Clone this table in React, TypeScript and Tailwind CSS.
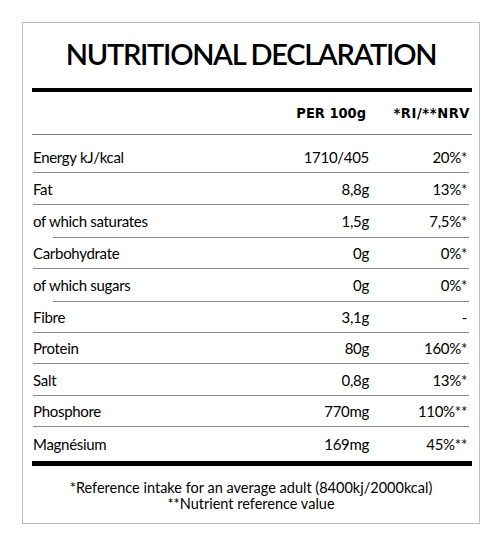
type Row = {
	label: string;
	value: string;
	ri: string;
	h: number;
	indent?: boolean;
	last?: boolean;
};

const rows: Row[] = [
	{ label: "Energy kJ/kcal", value: "1710/405", ri: "20%*", h: 38 },
	{ label: "Fat", value: "8,8g", ri: "13%*", h: 32 },
	{ label: "of which saturates", value: "1,5g", ri: "7,5%*", h: 33, indent: true },
	{ label: "Carbohydrate", value: "0g", ri: "0%*", h: 31 },
	{ label: "of which sugars", value: "0g", ri: "0%*", h: 33, indent: true },
	{ label: "Fibre", value: "3,1g", ri: "-", h: 31 },
	{ label: "Protein", value: "80g", ri: "160%*", h: 31 },
	{ label: "Salt", value: "0,8g", ri: "13%*", h: 32 },
	{ label: "Phosphore", value: "770mg", ri: "110%**", h: 31 },
	{ label: "Magnésium", value: "169mg", ri: "45%**", h: 34, last: true },
];

export default function App() {
	return (
		<div className="w-[500px] h-[548px] bg-white pt-[22px] pl-[22px] font-['Lato',sans-serif] text-black">
			<div className="w-[458px] h-[502px] border border-[#bdbdbd] flex flex-col">
				{/* Title */}
				<div className="h-[45px] flex items-end justify-center">
					<p className="text-[29px] leading-none font-semibold tracking-[-1.3px] whitespace-nowrap">
						NUTRITIONAL DECLARATION
					</p>
				</div>

				<div className="ml-[9px] mr-[7px] mt-[20px] flex flex-col">
					<div className="h-[4px] bg-black" />

					{/* Header */}
					<div className="h-[43px] flex items-center border-b border-[#7a7a7a] font-['DejaVu_Sans_Condensed',sans-serif] font-bold text-[14.5px] pt-[1px]">
						<div className="flex-1" />
						<div className="w-[100px] text-right pr-[8px]">PER 100g</div>
						<div className="w-[98px] text-right pr-[2px] tracking-[0.6px]">*RI/**NRV</div>
					</div>

					{/* Rows */}
					{rows.map((r, i) => (
						<div key={r.label} className="relative flex items-end" style={{ height: r.h }}>
							<div
								className={`flex w-full items-center text-[15px] tracking-[-0.3px] ${i === 0 ? "h-[31px]" : "h-full"}`}
							>
								<div className="flex-1 pl-[1px]">{r.label}</div>
								<div className="w-[100px] text-right pr-[5px]">{r.value}</div>
								<div className="w-[98px] text-right pr-[5px]">{r.ri}</div>
							</div>
							{!r.last && (
								<div
									className={`absolute bottom-0 right-[3px] h-px bg-[#8a8a8a] ${r.indent ? "left-[21px]" : "left-[1px]"}`}
								/>
							)}
						</div>
					))}

					<div className="h-[5px] bg-black" />
				</div>

				{/* Footer */}
				<div className="pt-[14px] text-center text-[14.5px] leading-[16px]">
					<p>*Reference intake for an average adult (8400kj/2000kcal)</p>
					<p>**Nutrient reference value</p>
				</div>
			</div>
		</div>
	);
}
